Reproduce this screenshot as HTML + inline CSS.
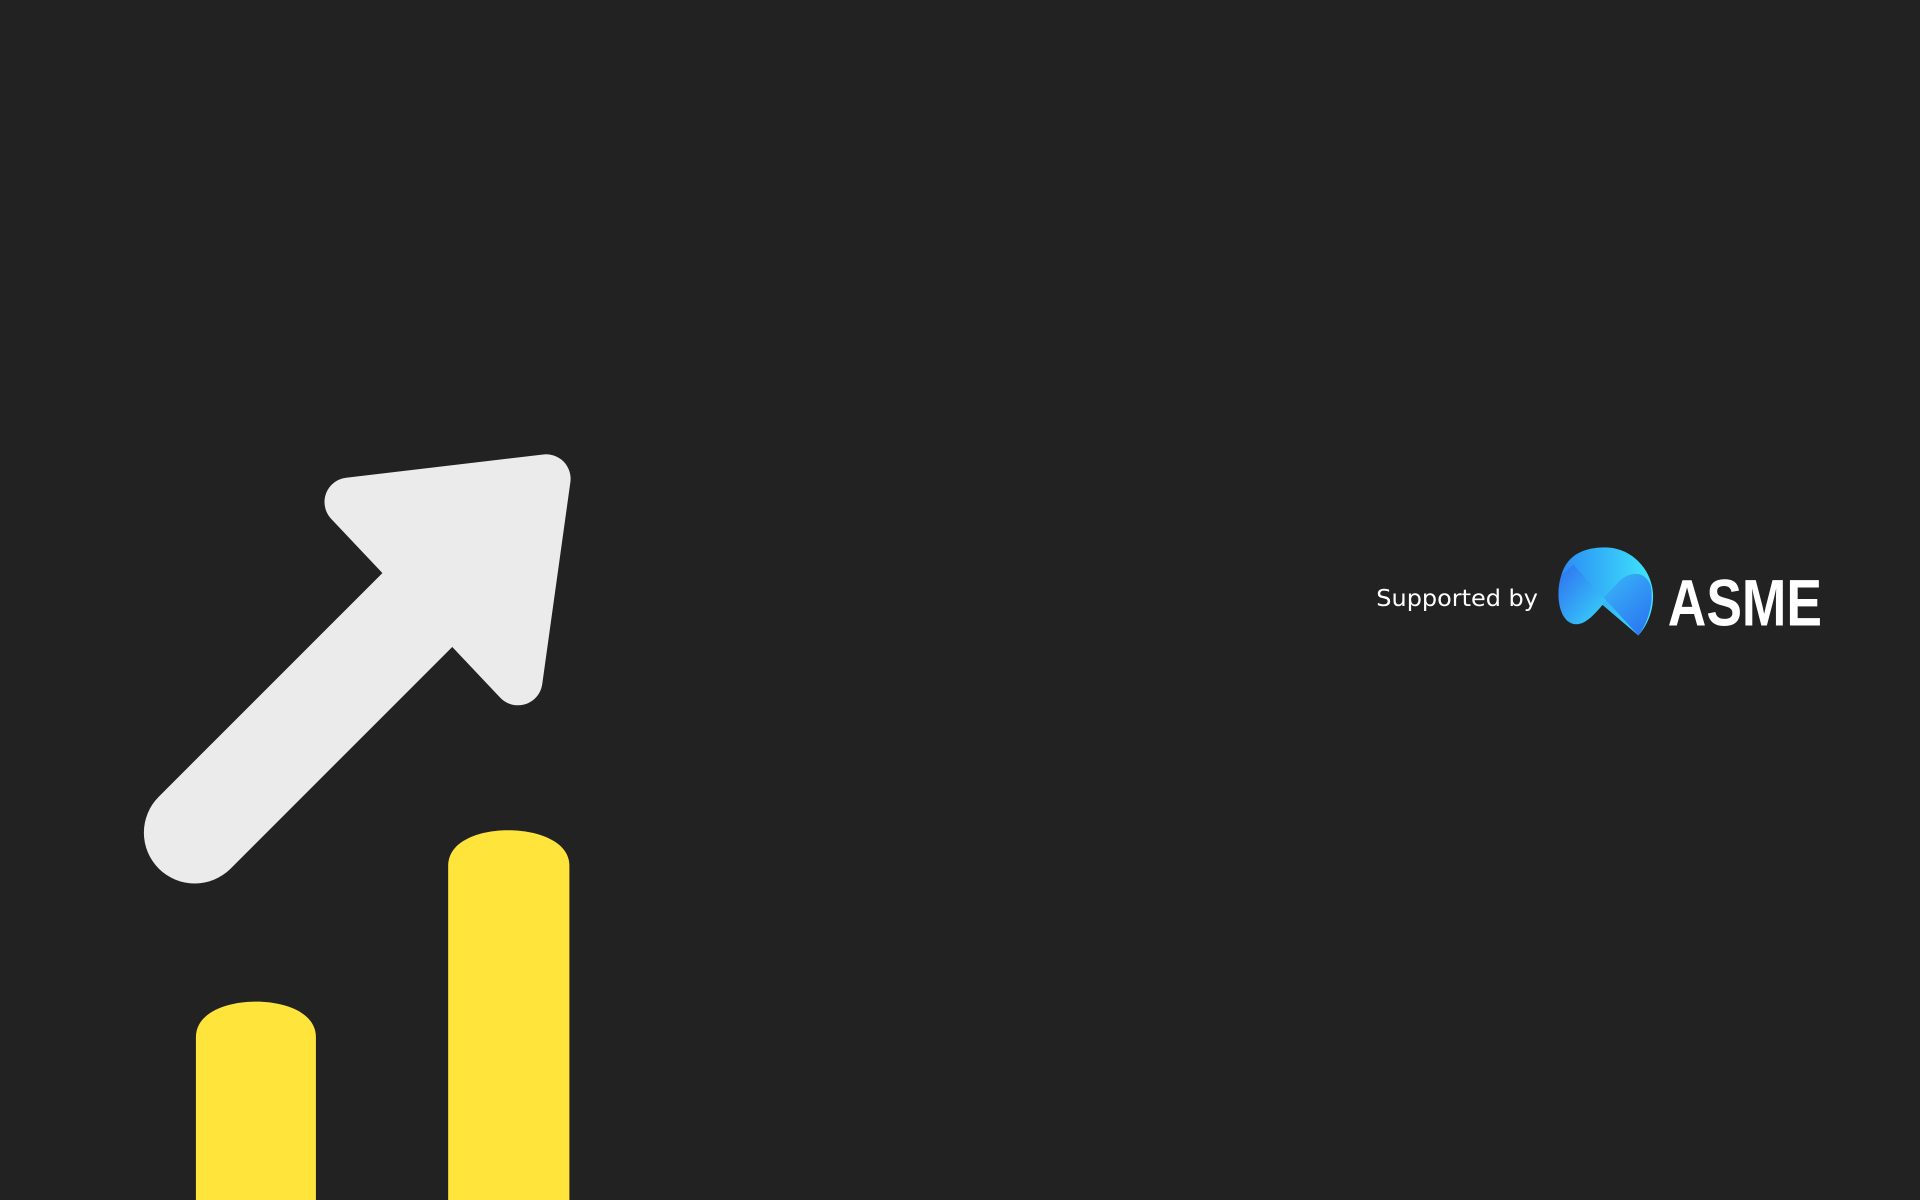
<!DOCTYPE html>
<html><head><style>
html,body{margin:0;padding:0;background:#222222;width:1920px;height:1200px;overflow:hidden}
svg{display:block}
</style></head><body>
<svg width="1920" height="1200" viewBox="0 0 1568 980" xmlns="http://www.w3.org/2000/svg">
<defs>
<linearGradient id="g1" x1="0" y1="0" x2="1" y2="0"><stop offset="0" stop-color="#2b8cf5"/><stop offset="1" stop-color="#3fe6fb"/></linearGradient>
<linearGradient id="g2" x1="0" y1="0" x2="1" y2="1"><stop offset="0" stop-color="#2f6ef0"/><stop offset="1" stop-color="#38d8fb"/></linearGradient>
<linearGradient id="g3" x1="0" y1="0" x2="1" y2="1"><stop offset="0" stop-color="#3fd0fb"/><stop offset="1" stop-color="#2a70f0"/></linearGradient>
</defs>
<rect width="1568" height="980" fill="#222222"/>
<line x1="159" y1="680" x2="380" y2="459" stroke="#EBEBEB" stroke-width="83" stroke-linecap="round"/>
<polygon points="285,410 446,391 423,556" fill="#EBEBEB" stroke="#EBEBEB" stroke-width="40" stroke-linejoin="round"/>
<path d="M160,980 V847 C160,827 185,818 209,818 C233,818 258,827 258,847 V980 Z" fill="#FFE53B"/>
<path d="M366,980 V707 C366,687 391,678 415,678 C439,678 465,687 465,707 V980 Z" fill="#FFE53B"/>
<text x="1124" y="495" font-family="DejaVu Sans, Verdana, sans-serif" font-size="18.5" fill="#ffffff" textLength="132" lengthAdjust="spacingAndGlyphs">Supported by</text>
<path d="M1275,470 C1280,452 1295,447 1311,447 C1332,447 1350,465 1350,487 C1350,500 1345,511 1338,519 L1304,490 Z" fill="url(#g1)"/>
<path d="M1275,470 C1271,482 1272,500 1280,507 C1290,515 1300,505 1312,490 L1285,461 Z" fill="url(#g2)"/>
<path d="M1285,461 L1338,519 C1346,508 1351,492 1348,478 C1343,465 1330,467 1322,475 L1310,488 Z" fill="url(#g3)"/>
<text x="1362" y="511" font-family="Liberation Sans, Arial, sans-serif" font-weight="bold" font-size="54" fill="#ffffff" textLength="126" lengthAdjust="spacingAndGlyphs">ASME</text>
</svg>
</body></html>
